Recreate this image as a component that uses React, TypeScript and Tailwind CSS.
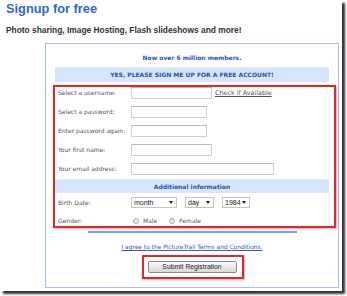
const dv = "font-['DejaVu_Sans',Verdana,sans-serif]";
const ar = "font-['Liberation_Sans',Arial,sans-serif]";

function Field({ label, box, extra }: { label: string; box: string; extra?: React.ReactNode }) {
  return (
    <div className="flex h-[19px] items-center">
      <div className={`w-[76px] pl-[3px] text-[6px] leading-[8px] text-[#555] ${dv}`}>{label}</div>
      <div className={`h-[12px] border border-[#cfcfcf] border-t-[#b9b9b9] bg-white ${box}`} />
      {extra}
    </div>
  );
}

function Select({ text, box }: { text: string; box: string }) {
  return (
    <div className={`flex h-[11px] items-center justify-between border border-[#c4c4c4] bg-white pl-[2px] pr-[3px] ${box}`}>
      <span className={`text-[7px] leading-none text-[#222] ${ar}`}>{text}</span>
      <svg width="4" height="3" viewBox="0 0 4 3">
        <path d="M0 0h4L2 3z" fill="#222" />
      </svg>
    </div>
  );
}

function Radio({ label }: { label: string }) {
  return (
    <div className="flex items-center gap-[4px]">
      <div className="h-[6px] w-[6px] rounded-full border border-[#a9a9a9] bg-gradient-to-br from-[#d8d8d8] to-white" />
      <span className={`text-[6px] leading-[8px] text-[#555] ${dv}`}>{label}</span>
    </div>
  );
}

export default function App() {
  return (
    <div className="h-[296px] w-[347px] overflow-hidden bg-white">
      <div className="relative flex h-[291px] w-[342px] flex-col bg-white shadow-[3px_3px_2px_rgba(0,0,0,0.8)]">
        <h1 className={`mt-[1px] pl-[6px] text-[12.8px] font-bold leading-[15px] text-[#3563d6] ${ar}`}>
          Signup for free
        </h1>
        <p className={`mt-[9px] pl-[6px] text-[8.4px] font-bold leading-[10px] text-[#333] ${ar}`}>
          Photo sharing, Image Hosting, Flash slideshows and more!
        </p>

        <div className="ml-[45px] mt-[8px] flex h-[245px] w-[294px] flex-col border border-[#a9c1e8]">
          <div className={`mt-[10px] text-center text-[6px] font-bold leading-[8px] text-[#2d4fbf] ${dv}`}>
            Now over 6 million members.
          </div>
          <div
            className={`mx-[9px] mt-[5px] flex h-[15px] items-center justify-center bg-[#d6e6fc] text-[6px] font-bold text-[#2d50b0] ${dv}`}
          >
            YES, PLEASE SIGN ME UP FOR A FREE ACCOUNT!
          </div>

          <div className="mx-[9px] mt-[1px] flex flex-col">
            <Field
              label="Select a username:"
              box="w-[81px]"
              extra={
                <span className={`ml-[3px] text-[6.4px] leading-[8px] text-[#555] underline ${dv}`}>
                  Check if Available
                </span>
              }
            />
            <Field label="Select a password:" box="w-[76px]" />
            <Field label="Enter password again:" box="w-[76px]" />
            <Field label="Your first name:" box="w-[81px]" />
            <Field label="Your email address:" box="w-[143px]" />

            <div
              className={`mt-[1px] flex h-[14px] items-center justify-center bg-[#d6e6fc] text-[6px] font-bold text-[#2d50b0] ${dv}`}
            >
              Additional information
            </div>

            <div className="flex h-[19px] items-center">
              <div className={`w-[76px] pl-[3px] text-[6px] leading-[8px] text-[#555] ${dv}`}>Birth Date:</div>
              <div className="flex gap-[8px]">
                <Select text="month" box="w-[46px]" />
                <Select text="day" box="w-[29px]" />
                <Select text="1984" box="w-[28px]" />
              </div>
            </div>
            <div className="flex h-[18px] items-center">
              <div className={`w-[78px] pl-[3px] text-[6px] leading-[8px] text-[#555] ${dv}`}>Gender:</div>
              <div className="flex gap-[12px]">
                <Radio label="Male" />
                <Radio label="Female" />
              </div>
            </div>
          </div>

          <div className="mx-auto mt-[1px] h-[2px] w-[209px] bg-[#7f9fe2]" />
          <div className={`mt-[10px] text-center text-[5.9px] leading-[8px] text-[#3a5bb0] underline ${dv}`}>
            I agree to the PictureTrail Terms and Conditions.
          </div>
          <div className="mt-[10px] flex justify-center">
            <div
              className={`flex h-[12px] w-[89px] items-center justify-center rounded-[2px] border border-[#8a8a8a] bg-gradient-to-b from-[#fbfbfb] to-[#d9d9d9] text-[6.8px] text-[#222] ${ar}`}
            >
              Submit Registration
            </div>
          </div>
        </div>

        {/* annotation highlights */}
        <div className="pointer-events-none absolute left-[53px] top-[85px] h-[143px] w-[283px] border-2 border-[#e3262b] shadow-[1px_1px_2px_rgba(0,0,0,0.3)]" />
        <div className="pointer-events-none absolute left-[142px] top-[255px] h-[24px] w-[102px] border-2 border-[#e3262b] shadow-[1px_1px_2px_rgba(0,0,0,0.3)]" />
      </div>
    </div>
  );
}
